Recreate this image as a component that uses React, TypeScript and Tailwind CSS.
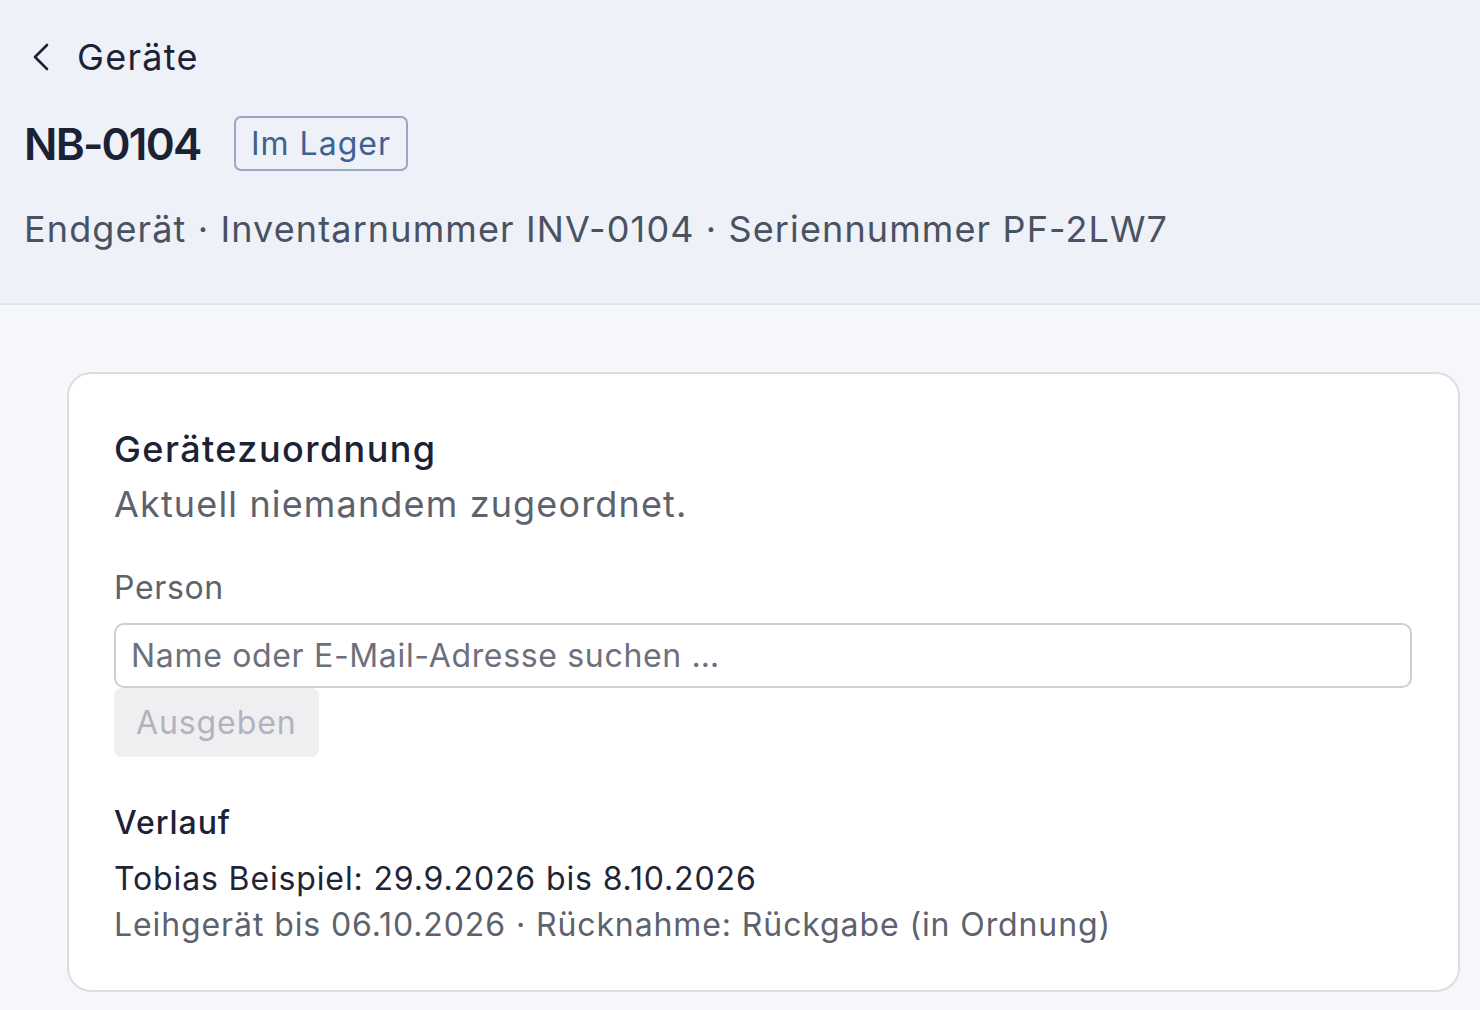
import React from 'react';

function BackChevron() {
  return (
    <svg width="20" height="30" viewBox="0 0 20 30" fill="none" className="block">
      <path d="M16 3 L4 15 L16 27" stroke="#1b2236" strokeWidth="2.6" strokeLinecap="round" strokeLinejoin="round" />
    </svg>
  );
}

export default function App() {
  return (
    <div className="min-h-[1010px] w-[1480px] bg-[#f6f7fb] font-['Inter',sans-serif] overflow-hidden">
      {/* Kopfbereich */}
      <div className="bg-[#eef1f8] border-b-2 border-[#e2e5ee] pl-6 pt-8 pb-[52px]">
        <div className="flex items-center h-[50px]">
          <div className="ml-[7px] w-[46px]">
            <BackChevron />
          </div>
          <span className="text-[36px] leading-[44px] tracking-[0.036em] text-[#1b2236]">Geräte</span>
        </div>

        <div className="flex items-center mt-[34px] h-[55px]">
          <h1 className="text-[44px] leading-none font-semibold tracking-[-0.04em] text-[#1b2236] w-[210px]">
            NB-0104
          </h1>
          <span className="h-[55px] flex items-center px-[15px] border-2 border-[#97a8c2] rounded-[7px] text-[32px] tracking-[0.031em] text-[#3e6291]">
            Im Lager
          </span>
        </div>

        <p className="mt-9 text-[36px] leading-[44px] tracking-[0.031em] text-[#4a5262]">
          Endgerät · Inventarnummer INV-0104 · Seriennummer PF-2LW7
        </p>
      </div>

      {/* Zuordnungskarte */}
      <div className="ml-[67px] mt-[67px] w-[1393px] bg-white border-2 border-[#dcdde3] rounded-[24px] pl-[45px] pr-[46px] pt-[53px] pb-[45px]">
        <h2 className="text-[36px] leading-[44px] font-medium tracking-[0.04em] text-[#1b2236]">Gerätezuordnung</h2>
        <p className="mt-[11px] text-[36px] leading-[44px] tracking-[0.032em] text-[#5d626d]">Aktuell niemandem zugeordnet.</p>

        <label className="block mt-[42px] text-[32px] leading-[40px] tracking-[0.02em] text-[#5d626d]">Person</label>
        <input
          type="text"
          placeholder="Name oder E-Mail-Adresse suchen …"
          className="mt-[15px] block w-full h-[65px] px-[15px] border-2 border-[#cdced6] rounded-[10px] text-[32px] tracking-[0.021em] text-[#1b2236] placeholder:text-[#6d707c] outline-none"
        />
        <button
          disabled
          className="block h-[69px] px-[22px] bg-[#efeff2] rounded-[8px] text-[32px] tracking-[0.028em] text-[#b1b3c0]"
        >
          Ausgeben
        </button>

        <h3 className="mt-[46px] text-[32px] leading-[40px] font-medium tracking-[0.03em] text-[#1b2236]">Verlauf</h3>
        <p className="mt-4 text-[32px] leading-[40px] tracking-[0.027em] text-[#1f2536]">Tobias Beispiel: 29.9.2026 bis 8.10.2026</p>
        <p className="mt-[6px] text-[32px] leading-[40px] tracking-[0.028em] text-[#5d626d]">
          Leihgerät bis 06.10.2026 · Rücknahme: Rückgabe (in Ordnung)
        </p>
      </div>
    </div>
  );
}
